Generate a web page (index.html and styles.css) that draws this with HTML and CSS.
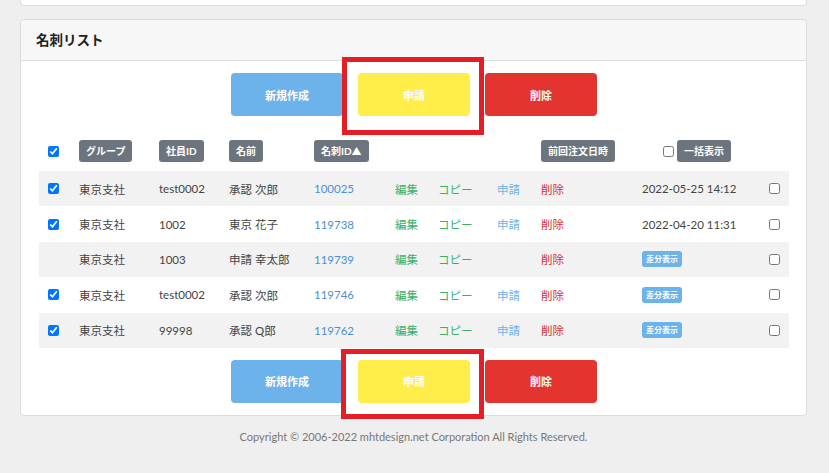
FILE: index.html
```html
<!DOCTYPE html>
<html lang="ja">
<head>
    <meta charset="UTF-8">
    <meta name="viewport" content="width=device-width, initial-scale=1.0">
    <title>名刺リスト</title>
    <link rel="stylesheet" href="styles.css">
</head>
<body>

    <div class="card card-top"></div>

    <div class="card">
        <div class="card-header">名刺リスト</div>
        <div class="card-body">

            <!-- 上部ボタン -->
            <div class="button-row">
                <button class="btn btn-new">新規作成</button>
                <span class="btn-wrap">
                    <button class="btn btn-apply">申請</button>
                    <span class="mark mark-top"></span>
                </span>
                <button class="btn btn-delete">削除</button>
            </div>

            <!-- 一覧 -->
            <div class="list">
                <div class="list-head">
                    <span class="cell"><input type="checkbox" checked></span>
                    <span class="cell"><span class="badge">グループ</span></span>
                    <span class="cell"><span class="badge">社員ID</span></span>
                    <span class="cell"><span class="badge">名前</span></span>
                    <span class="cell span-4"><span class="badge">名刺ID▲</span></span>
                    <span class="cell"><span class="badge">前回注文日時</span></span>
                    <span class="cell span-2 bulk"><input type="checkbox"><span class="badge">一括表示</span></span>
                </div>

                <div class="list-row">
                    <span class="cell"><input type="checkbox" checked></span>
                    <span class="cell">東京支社</span>
                    <span class="cell">test0002</span>
                    <span class="cell">承認 次郎</span>
                    <span class="cell"><a class="link-id">100025</a></span>
                    <span class="cell"><a class="link-edit">編集</a></span>
                    <span class="cell"><a class="link-edit">コピー</a></span>
                    <span class="cell"><a class="link-apply">申請</a></span>
                    <span class="cell"><a class="link-delete">削除</a></span>
                    <span class="cell">2022-05-25 14:12</span>
                    <span class="cell"><input type="checkbox"></span>
                </div>

                <div class="list-row">
                    <span class="cell"><input type="checkbox" checked></span>
                    <span class="cell">東京支社</span>
                    <span class="cell">1002</span>
                    <span class="cell">東京 花子</span>
                    <span class="cell"><a class="link-id">119738</a></span>
                    <span class="cell"><a class="link-edit">編集</a></span>
                    <span class="cell"><a class="link-edit">コピー</a></span>
                    <span class="cell"><a class="link-apply">申請</a></span>
                    <span class="cell"><a class="link-delete">削除</a></span>
                    <span class="cell">2022-04-20 11:31</span>
                    <span class="cell"><input type="checkbox"></span>
                </div>

                <div class="list-row">
                    <span class="cell"></span>
                    <span class="cell">東京支社</span>
                    <span class="cell">1003</span>
                    <span class="cell">申請 幸太郎</span>
                    <span class="cell"><a class="link-id">119739</a></span>
                    <span class="cell"><a class="link-edit">編集</a></span>
                    <span class="cell"><a class="link-edit">コピー</a></span>
                    <span class="cell"></span>
                    <span class="cell"><a class="link-delete">削除</a></span>
                    <span class="cell"><span class="badge-diff">差分表示</span></span>
                    <span class="cell"><input type="checkbox"></span>
                </div>

                <div class="list-row">
                    <span class="cell"><input type="checkbox" checked></span>
                    <span class="cell">東京支社</span>
                    <span class="cell">test0002</span>
                    <span class="cell">承認 次郎</span>
                    <span class="cell"><a class="link-id">119746</a></span>
                    <span class="cell"><a class="link-edit">編集</a></span>
                    <span class="cell"><a class="link-edit">コピー</a></span>
                    <span class="cell"><a class="link-apply">申請</a></span>
                    <span class="cell"><a class="link-delete">削除</a></span>
                    <span class="cell"><span class="badge-diff">差分表示</span></span>
                    <span class="cell"><input type="checkbox"></span>
                </div>

                <div class="list-row">
                    <span class="cell"><input type="checkbox" checked></span>
                    <span class="cell">東京支社</span>
                    <span class="cell">99998</span>
                    <span class="cell">承認 Q郎</span>
                    <span class="cell"><a class="link-id">119762</a></span>
                    <span class="cell"><a class="link-edit">編集</a></span>
                    <span class="cell"><a class="link-edit">コピー</a></span>
                    <span class="cell"><a class="link-apply">申請</a></span>
                    <span class="cell"><a class="link-delete">削除</a></span>
                    <span class="cell"><span class="badge-diff">差分表示</span></span>
                    <span class="cell"><input type="checkbox"></span>
                </div>
            </div>

            <!-- 下部ボタン -->
            <div class="button-row button-row-bottom">
                <button class="btn btn-new">新規作成</button>
                <span class="btn-wrap">
                    <button class="btn btn-apply">申請</button>
                    <span class="mark mark-bottom"></span>
                </span>
                <button class="btn btn-delete">削除</button>
            </div>
        </div>
    </div>

    <footer class="footer">Copyright © 2006-2022 mhtdesign.net Corporation All Rights Reserved.</footer>

</body>
</html>
```

FILE: styles.css
```css
body {
    margin: 0;
    padding: 0 22px 0 20px;
    background-color: #efefef;
    font-family: Lato, "Noto Sans CJK JP", sans-serif;
    color: #333;
}
.card {
    background-color: #fff;
    border: 1px solid #dcdcdc;
    border-radius: 4px;
}
.card-top {
    height: 5px;
    border-top: none;
    border-radius: 0 0 4px 4px;
    margin-bottom: 13px;
}
.card-header {
    height: 40px;
    line-height: 40px;
    padding: 0 15px;
    background-color: #f7f7f7;
    border-bottom: 1px solid #dcdcdc;
    border-radius: 4px 4px 0 0;
    font-size: 13.5px;
    font-weight: bold;
    color: #222;
}
.card-body {
    padding: 12px 17px 12px 18px;
}
.button-row {
    display: flex;
    justify-content: center;
    gap: 15px;
}
.button-row-bottom {
    margin-top: 12px;
}
.btn {
    width: 112px;
    height: 43px;
    border: none;
    border-radius: 4px;
    color: #fff;
    font-family: "Noto Sans CJK JP", sans-serif;
    font-size: 11px;
    font-weight: bold;
    padding: 0;
}
.btn-new {
    background-color: #6cb2eb;
}
.btn-apply {
    background-color: #ffed4a;
}
.btn-delete {
    background-color: #e3342f;
}
.btn-wrap {
    position: relative;
    display: flex;
}
.mark {
    position: absolute;
    border: 5px solid #e41e26;
    box-sizing: border-box;
    pointer-events: none;
}
.mark-top {
    left: -16px;
    top: -16px;
    width: 142px;
    height: 78px;
}
.mark-bottom {
    left: -17px;
    top: -11px;
    width: 143px;
    height: 70px;
}
.list {
    margin-top: 24px;
    font-size: 11.5px;
}
.list-head,
.list-row {
    display: grid;
    grid-template-columns: 40px 80px 70px 85px 81px 43px 59px 44px 101px 127px 20px;
    align-items: center;
}
.list-head {
    height: 22px;
    margin-bottom: 9px;
}
.list-row {
    height: 35.4px;
    color: #444;
}
.list-row:nth-child(even) {
    background-color: #f2f2f2;
}
.span-4 {
    grid-column: span 4;
}
.span-2 {
    grid-column: span 2;
}
.cell {
    display: flex;
    align-items: center;
    white-space: nowrap;
}
.cell:first-child {
    padding-left: 9px;
}
.bulk {
    padding-left: 21px;
    gap: 3px;
}
input[type="checkbox"] {
    width: 11px;
    height: 11px;
    margin: 0;
}
.badge {
    display: inline-block;
    height: 22px;
    line-height: 22px;
    padding: 0 7px;
    border-radius: 3px;
    background-color: #6c757d;
    color: #fff;
    font-size: 10px;
    font-weight: bold;
}
.badge-diff {
    display: inline-block;
    height: 16px;
    line-height: 16px;
    padding: 0 4px;
    border-radius: 3px;
    background-color: #6cb2eb;
    color: #fff;
    font-size: 8px;
    font-weight: bold;
}
.link-id {
    color: #4c8fd6;
}
.link-edit {
    color: #38b06a;
}
.link-apply {
    color: #6cb2eb;
}
.link-delete {
    color: #d9302c;
}
.footer {
    margin-top: 13px;
    text-align: center;
    font-size: 11px;
    line-height: 16px;
    color: #777;
}
```
